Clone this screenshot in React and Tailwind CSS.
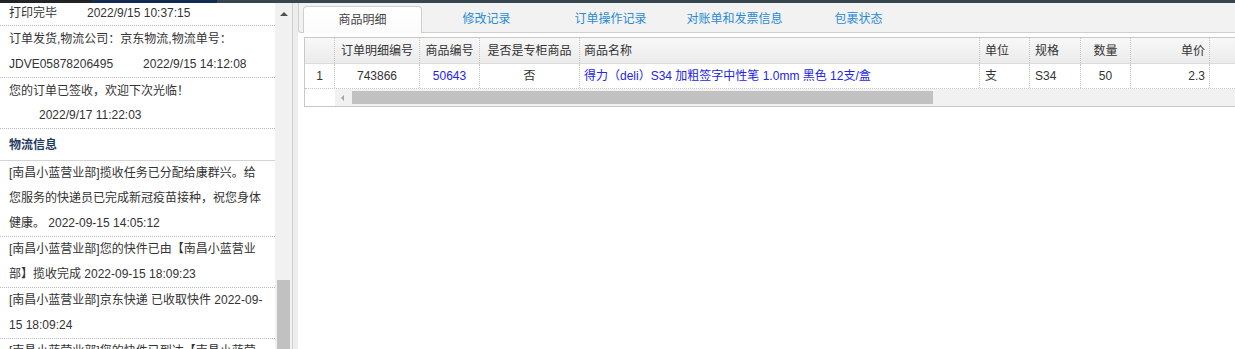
const font = { fontFamily: '"Liberation Sans", "Noto Sans CJK SC", sans-serif' };

const tabs = ["商品明细", "修改记录", "订单操作记录", "对账单和发票信息", "包裹状态"];

const logistics = [
  "[南昌小蓝营业部]揽收任务已分配给康群兴。给您服务的快递员已完成新冠疫苗接种，祝您身体健康。 2022-09-15 14:05:12",
  "[南昌小蓝营业部]您的快件已由【南昌小蓝营业部】揽收完成 2022-09-15 18:09:23",
  "[南昌小蓝营业部]京东快递 已收取快件 2022-09-15 18:09:24",
  "[南昌小蓝营业部]您的快件已到达【南昌小蓝营业部】 2022-09-15 18:10:01",
];

function LeftPanel() {
  return (
    <div className="flex h-full">
      <div className="w-[275px] overflow-hidden bg-white text-[12px] text-[#333]">
        {/* order log (scrolled) */}
        <div className="h-[23px] pl-[9px] leading-[20px] border-b border-dotted border-[#bbb]">
          打印完毕<span className="ml-[30px]">2022/9/15 10:37:15</span>
        </div>
        <div className="pl-[9px] pr-[10px] pt-px leading-[25px] border-b border-dotted border-[#bbb]">
          <div>订单发货,物流公司：京东物流,物流单号：</div>
          <div>
            JDVE05878206495<span className="ml-[30px]">2022/9/15 14:12:08</span>
          </div>
        </div>
        <div className="pl-[9px] pr-[10px] pt-px pb-px leading-[24px] border-b border-dotted border-[#bbb]">
          <div>您的订单已签收，欢迎下次光临！</div>
          <div className="pl-[30px]">2022/9/17 11:22:03</div>
        </div>
        <div className="h-[32px] pl-[9px] flex items-center font-bold text-[#1f3a62] border-b border-[#d4d4d4]">
          物流信息
        </div>
        {logistics.map((t, i) => (
          <div
            key={i}
            className="pl-[9px] pr-[10px] leading-[25px] border-b border-dotted border-[#bbb]"
          >
            {t}
          </div>
        ))}
      </div>
      {/* vertical scrollbar */}
      <div className="w-[18px] bg-[#f1f1f1] border-r border-[#d0d0d0] flex flex-col items-center justify-between">
        <div className="mt-[9px] w-0 h-0 border-x-[4px] border-x-transparent border-b-[4px] border-b-[#505050]" />
        <div className="w-[13px] h-[69px] bg-[#c1c1c1]" />
      </div>
      <div className="w-[5px] bg-[#ededed]" />
    </div>
  );
}

const cols = [
  { w: "w-[85px]", head: "订单明细编号", val: "743866", align: "justify-center" },
  { w: "w-[60px]", head: "商品编号", val: "50643", align: "justify-center", blue: true },
  { w: "w-[100px]", head: "是否是专柜商品", val: "否", align: "justify-center" },
  {
    w: "w-[400px]",
    head: "商品名称",
    val: "得力（deli）S34 加粗签字中性笔 1.0mm 黑色 12支/盒",
    align: "justify-start pl-[4px]",
    blue: true,
  },
  { w: "w-[50px]", head: "单位", val: "支", align: "justify-start pl-[5px]" },
  { w: "w-[51px]", head: "规格", val: "S34", align: "justify-start pl-[5px]" },
  { w: "w-[50px]", head: "数量", val: "50", align: "justify-center" },
  { w: "w-[79px]", head: "单价", val: "2.3", align: "justify-end pr-[4px]" },
];

function DetailTable() {
  return (
    <div className="w-[980px] border border-[#c8c8c8] text-[12px] text-[#333]">
      <div className="flex h-[26px] bg-linear-to-b from-[#f8f8f8] to-[#ebebeb] border-b border-[#dcdcdc]">
        <div className="w-[30px] border-r border-dotted border-[#c4c4c4]" />
        {cols.map((c) => (
          <div
            key={c.head}
            className={`${c.w} flex items-center ${c.align} border-r border-dotted border-[#c4c4c4]`}
          >
            {c.head}
          </div>
        ))}
        <div className="flex-1" />
      </div>
      <div className="flex h-[25px] bg-white border-b border-dotted border-[#c4c4c4]">
        <div className="w-[30px] flex items-center justify-center border-r border-dotted border-[#c4c4c4]">
          1
        </div>
        {cols.map((c) => (
          <div
            key={c.head}
            className={`${c.w} flex items-center ${c.align} border-r border-dotted border-[#c4c4c4] whitespace-nowrap ${
              c.blue ? "text-[#2424e6]" : ""
            }`}
          >
            {c.val}
          </div>
        ))}
        <div className="flex-1" />
      </div>
      {/* horizontal scrollbar */}
      <div className="flex h-[17px]">
        <div className="w-[30px] bg-white" />
        <div className="flex-1 bg-[#f1f1f1] flex items-center">
          <div className="ml-[6px] w-0 h-0 border-y-[3px] border-y-transparent border-r-[3px] border-r-[#a3a3a3]" />
          <div className="ml-[8px] w-[581px] h-[13px] bg-[#c1c1c1]" />
        </div>
      </div>
    </div>
  );
}

function RightPanel() {
  return (
    <div className="flex-1 min-w-0 overflow-hidden flex flex-col bg-white">
      <div className="h-[30px] flex items-end gap-[5px] pl-[4px] bg-[#f2f2f2] border-l border-b border-[#cfcfcf] rounded-bl-[3px]">
        {tabs.map((t, i) =>
          i === 0 ? (
            <div
              key={t}
              className="relative -mb-px w-[119px] h-[27px] flex items-center justify-center bg-linear-to-b from-white to-[#fbfbfb] border border-b-0 border-[#cfcfcf] rounded-t-[4px] text-[12px] text-[#444]"
            >
              {t}
            </div>
          ) : (
            <div
              key={t}
              className="w-[119px] h-[26px] flex items-center justify-center text-[12px] text-[#2a8bd3]"
            >
              {t}
            </div>
          )
        )}
      </div>
      <div className="flex-1 pl-[6px] pt-[4px]">
        <DetailTable />
      </div>
    </div>
  );
}

export default function App() {
  return (
    <div style={font} className="w-[1235px] h-[349px] overflow-hidden flex flex-col bg-white">
      <div className="h-[3px] flex">
        <div className="w-[92px] bg-[#202427]" />
        <div className="w-[125px] bg-[#132b52]" />
        <div className="flex-1 bg-[#37454f]" />
      </div>
      <div className="flex flex-1 min-h-0">
        <LeftPanel />
        <RightPanel />
      </div>
    </div>
  );
}
